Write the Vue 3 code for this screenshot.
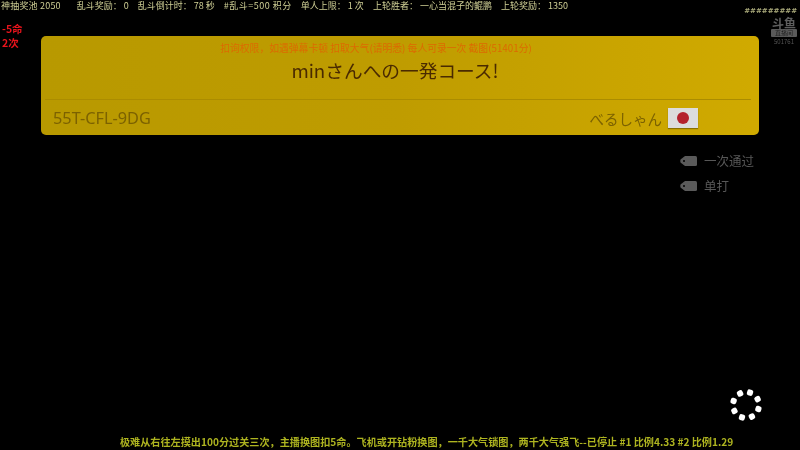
<script setup>
const dots = [0, 45, 90, 135, 180, 225, 270, 315]
</script>

<template>
  <div class="screen">
    <div class="stats">
      <span class="pool">神抽奖池 2050</span>
      <span>乱斗奖励： 0</span>
      <span>乱斗倒计时： 78 秒</span>
      <span class="wide">#乱斗=500 积分</span>
      <span>单人上限： 1 次</span>
      <span>上轮胜者： 一心当混子的鲲鹏</span>
      <span>上轮奖励： 1350</span>
    </div>

    <div class="lives">-5命<br />2次</div>

    <div class="watermark">
      <div class="hashes">#########</div>
      <div class="logo">斗鱼</div>
      <div class="logo-tag">直播间</div>
      <div class="room">501761</div>
    </div>

    <main class="main">
      <section class="card">
        <div class="notice">扣询权限，如遇弹幕卡顿 扣取大气(请明悉) 每人可录一次 截图(51401分)</div>
        <h1 class="title">minさんへの一発コース!</h1>
        <div class="divider"></div>
        <div class="card-foot">
          <span class="code">55T-CFL-9DG</span>
          <div class="maker">
            <span>べるしゃん</span>
            <span class="flag"><i></i></span>
          </div>
        </div>
      </section>

      <ul class="tags">
        <li>
          <svg width="17" height="10" viewBox="0 0 17 10"><path d="M5 0H15.5A1.5 1.5 0 0 1 17 1.5V8.500A1.500 1.500 0 0 1 15.500 10H5L0.500 6.500Q0 5 0.500 3.500Z" fill="#5a5a5a"/><circle cx="4" cy="5" r="1" fill="#000"/></svg>
          <span>一次通过</span>
        </li>
        <li>
          <svg width="17" height="10" viewBox="0 0 17 10"><path d="M5 0H15.5A1.5 1.5 0 0 1 17 1.5V8.500A1.500 1.500 0 0 1 15.500 10H5L0.500 6.500Q0 5 0.500 3.500Z" fill="#5a5a5a"/><circle cx="4" cy="5" r="1" fill="#000"/></svg>
          <span>单打</span>
        </li>
      </ul>
    </main>

    <div class="spinner">
      <b v-for="d in dots" :key="d" :style="{ transform: `rotate(${d + 18}deg) translateY(-13px)` }"></b>
    </div>

    <footer class="ticker">极难从右往左摸出100分过关三次，主播换图扣5命。飞机或开钻粉换图，一千大气锁图，两千大气强飞--已停止 #1 比例4.33 #2 比例1.29</footer>
  </div>
</template>

<style>
html, body { margin: 0; background: #000; }
</style>

<style scoped>
.screen {
  position: relative;
  width: 800px;
  height: 450px;
  overflow: hidden;
  background: #000;
  display: flex;
  flex-direction: column;
  font-family: "Noto Sans CJK SC", "Noto Sans", sans-serif;
  filter: blur(0.35px);
}
.stats {
  display: flex;
  gap: 9px;
  padding: 0 0 0 1px;
  height: 12px;
  align-items: center;
  font-size: 9px;
  line-height: 12px;
  color: #cfcf95;
  white-space: nowrap;
}
.pool {
  margin-right: 7px;
  letter-spacing: 0.2px;
}
.wide {
  letter-spacing: 0.5px;
}
.lives {
  position: absolute;
  left: 2px;
  top: 22px;
  font-size: 10.500px;
  line-height: 14px;
  font-weight: 700;
  color: #e8141c;
}
.watermark {
  position: absolute;
  right: 3px;
  top: 7px;
  width: 54px;
  display: flex;
  flex-direction: column;
  align-items: flex-end;
}
.hashes {
  font-size: 7px;
  line-height: 9px;
  font-weight: 700;
  color: #a9a97a;
  font-family: "DejaVu Sans", sans-serif;
  white-space: nowrap;
}
.logo {
  width: 26px;
  height: 12px;
  margin-top: 1px;
  font-size: 12px;
  line-height: 12px;
  color: #5e5e5e;
  text-align: center;
  font-weight: 700;
}
.logo-tag {
  width: 26px;
  height: 8px;
  background: #5a5a5a;
  color: #222;
  font-size: 6px;
  line-height: 8px;
  text-align: center;
  border-radius: 1px;
}
.room {
  width: 26px;
  margin-top: 1px;
  color: #555;
  font-size: 6px;
  line-height: 8px;
  text-align: center;
}
.main {
  flex: 1;
  padding: 24px 41px 0;
}
.card {
  width: 718px;
  height: 99px;
  box-sizing: border-box;
  border-radius: 5px;
  background: linear-gradient(90deg, #b89900 0%, #bf9c00 50%, #d0aa00 100%);
  display: flex;
  flex-direction: column;
  overflow: hidden;
}
.notice {
  margin-top: 5px;
  text-align: center;
  font-size: 9.800px;
  line-height: 14px;
  color: #dc6a00;
  white-space: nowrap;
  padding-right: 48px;
  filter: blur(0.6px);
}
.title {
  margin: 1px 0 0;
  text-align: center;
  font-size: 18.700px;
  line-height: 28px;
  font-weight: 400;
  color: #4a2a00;
  padding-right: 10px;
}
.divider {
  height: 1px;
  margin: 15px 8px 0 4px;
  background: #ab8c00;
}
.card-foot {
  display: flex;
  justify-content: space-between;
  align-items: center;
  padding: 0 61px 0 12px;
  margin-top: 4px;
  height: 28px;
  color: #7c6200;
}
.code {
  font-family: "Noto Sans", sans-serif;
  font-size: 16.300px;
}
.maker {
  display: flex;
  align-items: center;
  gap: 6px;
}
.maker span:first-child {
  font-size: 14.500px;
}
.flag {
  width: 30px;
  height: 20px;
  background: #dcdcdc;
  box-shadow: 0 1px 1px #8a7000;
  display: flex;
  align-items: center;
  justify-content: center;
}
.flag i {
  display: block;
  width: 12px;
  height: 12px;
  border-radius: 50%;
  background: #b4212c;
}
.tags {
  list-style: none;
  margin: 17px 0 0;
  padding: 0 0 0 639px;
  display: flex;
  flex-direction: column;
  gap: 7px;
}
.tags li {
  display: flex;
  align-items: center;
  gap: 7px;
  height: 18px;
  color: #585858;
  font-size: 12.500px;
  white-space: nowrap;
}
.tags li span {
  margin-top: -2px;
}
.spinner {
  position: absolute;
  left: 745.500px;
  top: 405px;
  width: 0;
  height: 0;
}
.spinner b {
  position: absolute;
  left: -3px;
  top: -3px;
  width: 6px;
  height: 6px;
  border-radius: 2px;
  background: #fff;
}
.ticker {
  position: absolute;
  left: 120px;
  bottom: 1px;
  font-size: 10.150px;
  line-height: 14px;
  font-weight: 700;
  color: #aeb420;
  white-space: nowrap;
}
</style>
